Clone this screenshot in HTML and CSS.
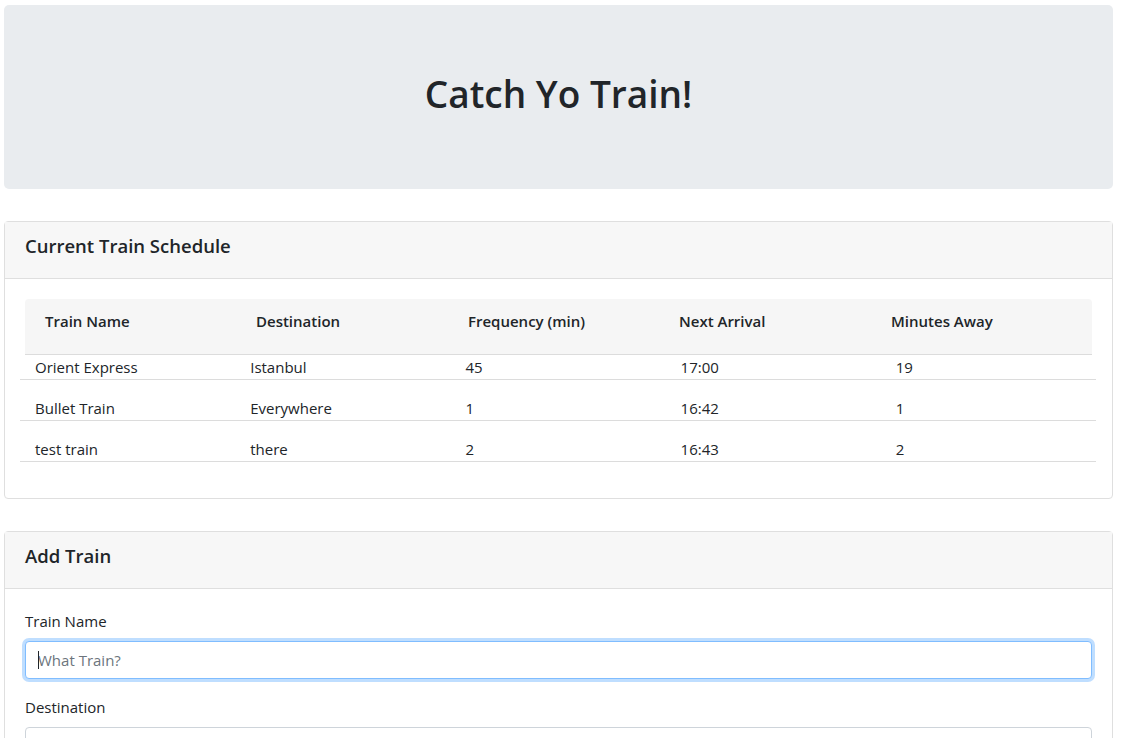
FILE: index.html
```html
<!DOCTYPE html>
<html lang="en">
<head>
<meta charset="utf-8">
<title>Catch Yo Train!</title>
<link rel="stylesheet" href="styles.css">
</head>
<body>
<div class="page">
  <header class="jumbotron">
    <h1 class="title">Catch Yo Train!</h1>
  </header>

  <section class="card">
    <div class="card-header"><h5 class="card-title">Current Train Schedule</h5></div>
    <div class="card-body">
      <div class="schedule">
        <div class="thead">
          <div class="th">Train Name</div>
          <div class="th">Destination</div>
          <div class="th">Frequency (min)</div>
          <div class="th">Next Arrival</div>
          <div class="th">Minutes Away</div>
        </div>
        <div class="row first">
          <div class="td">Orient Express</div>
          <div class="td">Istanbul</div>
          <div class="td">45</div>
          <div class="td">17:00</div>
          <div class="td">19</div>
        </div>
        <div class="row">
          <div class="td">Bullet Train</div>
          <div class="td">Everywhere</div>
          <div class="td">1</div>
          <div class="td">16:42</div>
          <div class="td">1</div>
        </div>
        <div class="row">
          <div class="td">test train</div>
          <div class="td">there</div>
          <div class="td">2</div>
          <div class="td">16:43</div>
          <div class="td">2</div>
        </div>
      </div>
    </div>
  </section>

  <section class="card add">
    <div class="card-header"><h5 class="card-title">Add Train</h5></div>
    <div class="card-body">
      <div class="form-group">
        <label class="label" for="name">Train Name</label>
        <div class="input-wrap">
          <input class="input focused" id="name" type="text" placeholder="What Train?">
          <span class="caret"></span>
        </div>
      </div>
      <div class="form-group">
        <label class="label" for="dest">Destination</label>
        <input class="input" id="dest" type="text">
      </div>
    </div>
  </section>
</div>
</body>
</html>
```
FILE: styles.css
```css
* { box-sizing: border-box; }
html, body { margin: 0; padding: 0; }
body {
  font-family: "Open Sans", "Noto Sans", sans-serif;
  font-size: 15px;
  line-height: 1.5;
  color: #212529;
  background: #fff;
}
.page {
  padding: 5px 10px 0 4px;
}
.jumbotron {
  background: #e9ecef;
  border-radius: 5px;
  padding: 64px 32px;
  text-align: center;
  margin-bottom: 32px;
}
.title {
  margin: 0 0 6px;
  font-size: 37px;
  line-height: 50px;
  font-weight: 600;
}
.card {
  border: 1px solid #dfdfdf;
  border-radius: 4px;
  background: #fff;
}
.card.add { margin-top: 32px; }
.card-header {
  background: #f7f7f7;
  border-bottom: 1px solid #dfdfdf;
  padding: 12px 20px;
}
.card-title {
  margin: 0 0 8px;
  font-size: 18.5px;
  line-height: 24px;
  font-weight: 600;
}
.card-body {
  padding: 20px;
}
.schedule { margin-bottom: 16px; }
.thead {
  display: grid;
  grid-template-columns: 211px 212px 211px 212px 1fr;
  padding: 10px 0 0 20px;
  height: 56px;
  background: #f6f6f6;
  border-bottom: 1px solid #dcdcdc;
  border-radius: 4px 4px 0 0;
}
.th {
  font-weight: 600;
  line-height: 24px;
}
.row {
  display: grid;
  grid-template-columns: repeat(5, 1fr);
  margin: 0 -4px 0 -5px;
  padding-top: 16px;
  border-bottom: 1px solid #dcdcdc;
}
.row.first { padding-top: 0; }
.td {
  padding-left: 15px;
  line-height: 24px;
}
.form-group { margin-bottom: 16px; }
.label {
  display: block;
  line-height: 24px;
  margin-bottom: 8px;
}
.input-wrap { position: relative; }
.caret {
  position: absolute;
  left: 13px;
  top: 10px;
  width: 1px;
  height: 18px;
  background: #212529;
}
.input {
  display: block;
  width: 100%;
  height: 38px;
  padding: 6px 12px;
  font: inherit;
  color: #495057;
  background: #fff;
  border: 1px solid #ced4da;
  border-radius: 4px;
  outline: none;
}
.input::placeholder { color: #6c757d; }
.input.focused {
  border-color: #80bdff;
  box-shadow: 0 0 0 3px rgba(0, 123, 255, 0.25);
}
```
